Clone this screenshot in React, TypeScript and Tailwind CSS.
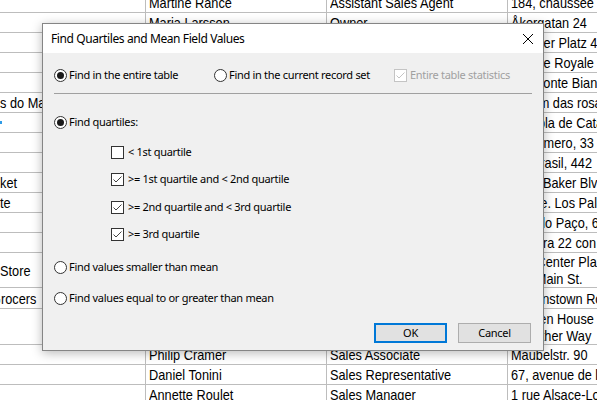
import React from 'react';

type Row = {
  h: string;
  company: React.ReactNode;
  contact: string;
  title: string;
  address: React.ReactNode;
};

const rows: Row[] = [
  { h: 'h-[20px]', company: '', contact: 'Martine Rancé', title: 'Assistant Sales Agent', address: '184, chaussée de Tournai' },
  { h: 'h-[20px]', company: '', contact: 'Maria Larsson', title: 'Owner', address: 'Åkergatan 24' },
  { h: 'h-[20px]', company: '', contact: 'Peter Franken', title: 'Marketing Manager', address: 'Berliner Platz 43' },
  { h: 'h-[20px]', company: '', contact: 'Carine Schmitt', title: 'Marketing Manager', address: '54, rue Royale' },
  { h: 'h-[20px]', company: '', contact: 'Paolo Accorti', title: 'Sales Representative', address: 'Via Monte Bianco 34' },
  { h: 'h-[20px]', company: 's do Mar', contact: 'Lino Rodriguez', title: 'Sales Manager', address: 'Jardim das rosas n. 32' },
  {
    h: 'h-[20px]',
    company: <span className="inline-block w-[2px] h-[3px] bg-[#2f9be6]" />,
    contact: 'Eduardo Saavedra',
    title: 'Marketing Manager',
    address: 'Rambla de Cataluña, 23',
  },
  { h: 'h-[20px]', company: '', contact: 'José Pedro Freyre', title: 'Sales Manager', address: 'C/ Romero, 33' },
  { h: 'h-[20px]', company: '', contact: 'André Fonseca', title: 'Sales Associate', address: 'Av. Brasil, 442' },
  { h: 'h-[20px]', company: 'ket', contact: 'Howard Snyder', title: 'Marketing Manager', address: '2732 Baker Blvd.' },
  { h: 'h-[20px]', company: 'te', contact: 'Manuel Pereira', title: 'Owner', address: '5ª Ave. Los Palos Grandes' },
  { h: 'h-[20px]', company: '', contact: 'Mario Pontes', title: 'Accounting Manager', address: 'Rua do Paço, 67' },
  { h: 'h-[20px]', company: '', contact: 'Carlos Hernández', title: 'Sales Representative', address: 'Carrera 22 con Ave. Carlos Soublette #8-35' },
  {
    h: 'h-[35px]',
    company: 'Store',
    contact: 'Yoshi Latimer',
    title: 'Sales Representative',
    address: (
      <>
        City Center Plaza
        <br />
        516 Main St.
      </>
    ),
  },
  { h: 'h-[21px]', company: 'Grocers', contact: 'Patricia McKenna', title: 'Sales Associate', address: '8 Johnstown Road' },
  {
    h: 'h-[36px]',
    company: '',
    contact: 'Helen Bennett',
    title: 'Marketing Manager',
    address: (
      <>
        Garden House
        <br />
        Crowther Way
      </>
    ),
  },
  { h: 'h-[20px]', company: '', contact: 'Philip Cramer', title: 'Sales Associate', address: 'Maubelstr. 90' },
  { h: 'h-[20px]', company: '', contact: 'Daniel Tonini', title: 'Sales Representative', address: "67, avenue de l'Europe" },
  { h: 'h-[20px]', company: '', contact: 'Annette Roulet', title: 'Sales Manager', address: '1 rue Alsace-Lorraine' },
];

// datasheet uses a narrow face; squeeze the regular one to match
function Narrow({ children, className = '' }: { children: React.ReactNode; className?: string }) {
  return <span className={`inline-block origin-left scale-x-[0.85] ${className}`}>{children}</span>;
}

function Radio({ checked }: { checked?: boolean }) {
  return (
    <span className="w-[13px] h-[13px] rounded-full border border-[#333] bg-white flex items-center justify-center shrink-0">
      {checked && <span className="w-[7px] h-[7px] rounded-full bg-[#1a1a1a]" />}
    </span>
  );
}

function Check({ checked, disabled }: { checked?: boolean; disabled?: boolean }) {
  const color = disabled ? '#c4c4c4' : '#444444';
  return (
    <span
      className={`w-[13px] h-[13px] border bg-white flex items-center justify-center shrink-0 ${
        disabled ? 'border-[#c4c4c4]' : 'border-[#333]'
      }`}
    >
      {checked && (
        <svg width="11" height="11" viewBox="0 0 11 11">
          <path d="M1.5 5.5 L4 8 L9.5 2.5" fill="none" stroke={color} strokeWidth="1" />
        </svg>
      )}
    </span>
  );
}

export default function App() {
  return (
    <div className="relative w-[597px] h-[400px] overflow-hidden bg-white">
      {/* background datasheet */}
      <div className="-mt-[7px] font-['Liberation_Sans',Arial,sans-serif] text-[15px] leading-[17px] text-black">
        {rows.map((r, i) => (
          <div key={i} className={`flex ${r.h} border-b border-[#bdbdbd] whitespace-nowrap`}>
            <div className="w-[146px] shrink-0 border-r border-[#bdbdbd] overflow-hidden flex items-center">
              {typeof r.company === 'string' && r.company ? (
                <Narrow className={r.company === 'Grocers' ? 'ml-[-9px]' : ''}>{r.company}</Narrow>
              ) : (
                r.company
              )}
            </div>
            <div className="w-[181px] shrink-0 border-r border-[#bdbdbd] overflow-hidden pl-[3px] flex items-center">
              <Narrow>{r.contact}</Narrow>
            </div>
            <div className="w-[181px] shrink-0 border-r border-[#bdbdbd] overflow-hidden pl-[3px] flex items-center">
              <Narrow>{r.title}</Narrow>
            </div>
            <div className="w-[200px] shrink-0 overflow-hidden pl-[3px] flex items-center">
              <Narrow>{r.address}</Narrow>
            </div>
          </div>
        ))}
      </div>

      {/* dialog */}
      <div className="absolute left-[42px] top-[23px] w-[502px] h-[328px] border border-[#858585] bg-[#f0f0f0] shadow-[0_2px_10px_rgba(0,0,0,0.28)] flex flex-col font-['Noto_Sans','Liberation_Sans',sans-serif] text-[11px] tracking-[-0.3px] text-black">
        <div className="h-[29px] bg-white flex items-center justify-between pl-[8px] pr-[10px] shrink-0">
          <span className="text-[12px] tracking-[-0.4px]">Find Quartiles and Mean Field Values</span>
          <svg width="10" height="10" viewBox="0 0 10 10">
            <path d="M0 0 L10 10 M10 0 L0 10" stroke="#000" strokeWidth="1" />
          </svg>
        </div>

        <div className="flex-1 flex flex-col pt-[12px] px-[11px]">
          <div className="h-[20px] flex items-center">
            <label className="w-[160px] flex items-center gap-[2px]">
              <Radio checked />
              <span>Find in the entire table</span>
            </label>
            <label className="w-[180px] flex items-center gap-[2px]">
              <Radio />
              <span>Find in the current record set</span>
            </label>
            <label className="flex items-center gap-[3px] text-[#a0a0a0]">
              <Check checked disabled />
              <span>Entire table statistics</span>
            </label>
          </div>

          <div className="mt-[8px] h-px bg-[#a0a0a0]" />

          <label className="mt-[18px] h-[20px] flex items-center gap-[2px]">
            <Radio checked />
            <span>Find quartiles:</span>
          </label>

          <div className="pl-[57px] flex flex-col">
            <label className="mt-[10px] h-[20px] flex items-center gap-[4px]">
              <Check />
              <span>&lt; 1st quartile</span>
            </label>
            <label className="mt-[7px] h-[20px] flex items-center gap-[4px]">
              <Check checked />
              <span>&gt;= 1st quartile and &lt; 2nd quartile</span>
            </label>
            <label className="mt-[8px] h-[20px] flex items-center gap-[4px]">
              <Check checked />
              <span>&gt;= 2nd quartile and &lt; 3rd quartile</span>
            </label>
            <label className="mt-[7px] h-[20px] flex items-center gap-[4px]">
              <Check checked />
              <span>&gt;= 3rd quartile</span>
            </label>
          </div>

          <label className="mt-[13px] h-[20px] flex items-center gap-[2px]">
            <Radio />
            <span>Find values smaller than mean</span>
          </label>
          <label className="mt-[11px] h-[20px] flex items-center gap-[2px]">
            <Radio />
            <span>Find values equal to or greater than mean</span>
          </label>

          <div className="mt-[15px] flex justify-end gap-[11px] pr-[1px]">
            <button className="w-[73px] h-[20px] border-2 border-[#0078d7] bg-[#e1e1e1] flex items-center justify-center">
              OK
            </button>
            <button className="w-[73px] h-[20px] border border-[#adadad] bg-[#e1e1e1] flex items-center justify-center">
              Cancel
            </button>
          </div>
        </div>
      </div>
    </div>
  );
}
